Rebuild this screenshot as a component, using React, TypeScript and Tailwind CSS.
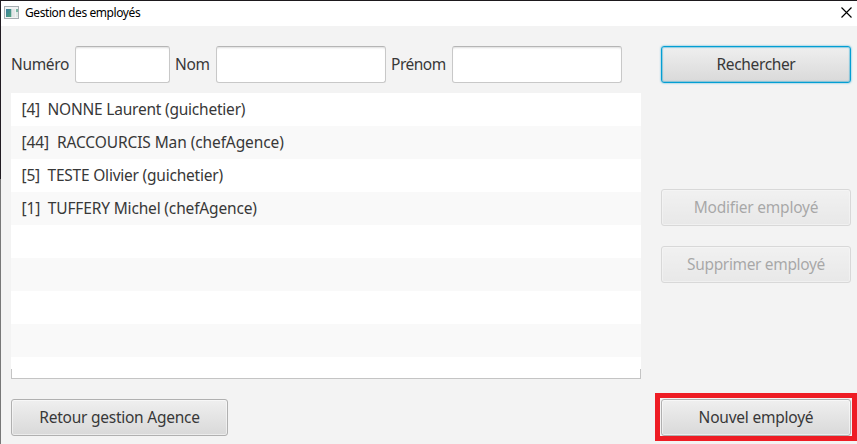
import type { ReactNode } from "react";

const employees = [
  { id: 4, label: "NONNE Laurent (guichetier)", tracking: "tracking-[-0.22px]" },
  { id: 44, label: "RACCOURCIS Man (chefAgence)", tracking: "tracking-[-0.1px]" },
  { id: 5, label: "TESTE Olivier (guichetier)", tracking: "tracking-[-0.22px]" },
  { id: 1, label: "TUFFERY Michel (chefAgence)", tracking: "tracking-[-0.16px]" },
];

function Button({ children, className = "" }: { children: ReactNode; className?: string }) {
  return (
    <button
      className={`flex h-[37px] shrink-0 items-center justify-center rounded-[3px] border bg-linear-to-b from-[#efefef] to-[#d9d9d9] pb-px whitespace-nowrap ${className}`}
    >
      {children}
    </button>
  );
}

function Field({ label, labelClass, inputClass }: { label: string; labelClass: string; inputClass: string }) {
  return (
    <label className="flex items-center">
      <span className={`shrink-0 pb-px whitespace-nowrap ${labelClass}`}>{label}</span>
      <input
        className={`h-[37px] rounded-[3px] border border-[#c8c8c8] border-t-[#b5b5b5] bg-white px-2 shadow-[inset_0_2px_2px_-1px_#dddddd] outline-none ${inputClass}`}
      />
    </label>
  );
}

export default function App() {
  return (
    <div className="flex h-[444px] w-[857px] overflow-hidden border-t border-[#1d191d] bg-[#f3f3f3] font-['Noto_Sans','Open_Sans',sans-serif] text-[15.5px] leading-[22px] text-[#383838]">
      <div className="flex w-px shrink-0 flex-col">
        <div className="h-[178px] bg-[#211c22]" />
        <div className="flex-1 bg-[#777777]" />
      </div>
      <div className="flex w-[856px] flex-col">
        <header className="flex h-[25px] shrink-0 items-center bg-white pr-[5px] pb-[2px] pl-[3px] text-black">
          <svg width="15" height="13" viewBox="0 0 15 13" shapeRendering="crispEdges">
            <defs>
              <linearGradient id="pane" x1="0" y1="0" x2="1" y2="1">
                <stop offset="0" stopColor="#397da0" />
                <stop offset="1" stopColor="#4fa37a" />
              </linearGradient>
            </defs>
            <rect x="0.5" y="0.5" width="14" height="12" fill="#f1f3f3" stroke="#a6adb1" />
            <rect x="2" y="3" width="5" height="8" fill="url(#pane)" />
            <rect x="7" y="3" width="1" height="8" fill="#b9d2d0" />
            <rect x="8" y="3" width="3" height="8" fill="#e3e7e7" />
            <rect x="12" y="3" width="2" height="3" fill="#79b6a3" />
            <rect x="12" y="6" width="2" height="5" fill="#dde9e5" />
          </svg>
          <h1 className="ml-[6px] flex-1 pt-px text-[12px] leading-4 tracking-[-0.42px]">Gestion des employés</h1>
          <svg width="11" height="11" viewBox="0 0 11 11" fill="none" stroke="#000000" strokeWidth="1.15">
            <path d="M.5.5l10 10M10.5.5l-10 10" />
          </svg>
        </header>

        <main className="flex flex-1 pt-5 pl-[10px]">
          <section className="flex w-[630px] shrink-0 flex-col">
            <div className="flex shrink-0">
              <Field label="Numéro" labelClass="w-[64px] tracking-[-0.35px]" inputClass="w-[95px]" />
              <Field label="Nom" labelClass="ml-[5px] w-[41px] tracking-[-0.3px]" inputClass="w-[170px]" />
              <Field label="Prénom" labelClass="ml-[5px] w-[61px] tracking-[-0.5px]" inputClass="w-[170px]" />
            </div>
            <div className="mt-[10px] flex h-[286px] shrink-0 flex-col overflow-hidden">
              <ul className="flex h-[276px] shrink-0 flex-col overflow-hidden">
                {Array.from({ length: 9 }, (_, index) => {
                  const employee = employees[index];
                  return (
                    <li
                      key={index}
                      className="flex h-[33px] shrink-0 items-center pb-[2px] pl-[10.5px] whitespace-pre odd:bg-white even:bg-[#f9f9f9]"
                    >
                      {employee && (
                        <span className={employee.tracking}>{`[${employee.id}]  ${employee.label}`}</span>
                      )}
                    </li>
                  );
                })}
              </ul>
              <div className="h-[10px] shrink-0 border-x border-b border-[#c4c4c4] bg-white" />
            </div>
            <Button className="mt-5 w-[217px] border-[#b0b0b0] tracking-[-0.25px] shadow-[inset_0_0_0_1px_rgba(255,255,255,0.5)]">
              Retour gestion Agence
            </Button>
          </section>

          <aside className="ml-5 flex w-[190px] shrink-0 flex-col">
            <Button className="border-[#039ed3] tracking-[-0.36px] shadow-[0_0_2px_rgba(3,158,211,0.8),inset_0_0_1px_1px_rgba(3,158,211,0.4)]">
              Rechercher
            </Button>
            <Button className="mt-[106px] border-[#b0b0b0] tracking-[-0.22px] opacity-40 shadow-[inset_0_0_0_1px_rgba(255,255,255,0.5)]">
              Modifier employé
            </Button>
            <Button className="mt-5 border-[#b0b0b0] tracking-[-0.34px] opacity-40 shadow-[inset_0_0_0_1px_rgba(255,255,255,0.5)]">
              Supprimer employé
            </Button>
            <div className="-mx-[6px] mt-[110px] flex h-[48px] w-[202px] shrink-0 border-[5px] border-[#ee1c24] px-px pt-px">
              <Button className="w-[190px] border-[#b0b0b0] tracking-[-0.22px] shadow-[inset_0_0_0_1px_rgba(255,255,255,0.5)]">
                Nouvel employé
              </Button>
            </div>
          </aside>
        </main>
      </div>
    </div>
  );
}
